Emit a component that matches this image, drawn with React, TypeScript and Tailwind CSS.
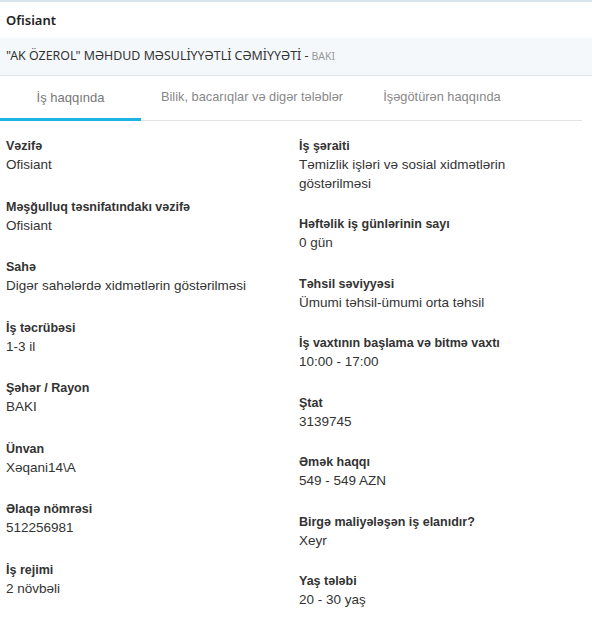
import React from "react";

type Item = { label: string; value: string };

const left: Item[] = [
  { label: "Vəzifə", value: "Ofisiant" },
  { label: "Məşğulluq təsnifatındakı vəzifə", value: "Ofisiant" },
  { label: "Sahə", value: "Digər sahələrdə xidmətlərin göstərilməsi" },
  { label: "İş təcrübəsi", value: "1-3 il" },
  { label: "Şəhər / Rayon", value: "BAKI" },
  { label: "Ünvan", value: "Xəqani14\\A" },
  { label: "Əlaqə nömrəsi", value: "512256981" },
  { label: "İş rejimi", value: "2 növbəli" },
];

const right: Item[] = [
  { label: "İş şəraiti", value: "Təmizlik işləri və sosial xidmətlərin göstərilməsi" },
  { label: "Həftəlik iş günlərinin sayı", value: "0 gün" },
  { label: "Təhsil səviyyəsi", value: "Ümumi təhsil-ümumi orta təhsil" },
  { label: "İş vaxtının başlama və bitmə vaxtı", value: "10:00 - 17:00" },
  { label: "Ştat", value: "3139745" },
  { label: "Əmək haqqı", value: "549 - 549 AZN" },
  { label: "Birgə maliyələşən iş elanıdır?", value: "Xeyr" },
  { label: "Yaş tələbi", value: "20 - 30 yaş" },
];

function Field({ item, tight }: { item: Item; tight?: boolean }) {
  return (
    <div className={tight ? "mb-[21px]" : "mb-[22px]"}>
      <div className="text-[12.5px] font-bold leading-[20px] text-[#333333]">{item.label}</div>
      <div className="text-[13.5px] leading-[18.5px] text-[#333333]">{item.value}</div>
    </div>
  );
}

export default function App() {
  return (
    <div className="w-[592px] h-[633px] bg-white overflow-hidden" style={{ fontFamily: '"Liberation Sans", Arial, sans-serif' }}>
      <div className="border-t-2 border-[#d7e6ee]">
        <div className="h-[36px] flex items-center px-[6px] pt-[1px]">
          <span className="text-[13px] font-semibold text-[#222222]" style={{ fontFamily: '"Noto Sans", sans-serif' }}>
            Ofisiant
          </span>
        </div>
        <div
          className="h-[38px] flex items-center px-[6px] bg-[#f4f8fb] border-b border-[#dde4e9]"
          style={{ fontFamily: '"Noto Sans", sans-serif' }}
        >
          <span className="text-[12.4px] text-[#333333]">"AK ÖZEROL" MƏHDUD MƏSULİYYƏTLİ CƏMİYYƏTİ - </span>
          <span className="text-[10.5px] text-[#999999] ml-[3px]">BAKI</span>
        </div>
      </div>
      <div className="mr-[10px] flex border-b border-[#e3e3e3] h-[45px]">
        <div className="w-[141px] flex items-center justify-center text-[13px] text-[#777777] border-b-[3px] border-[#1ab3e2] -mb-[1px] pt-[1px]">
          İş haqqında
        </div>
        <div className="w-[222px] flex items-center justify-center text-[12.8px] text-[#888888] pb-[2px]">
          Bilik, bacarıqlar və digər tələblər
        </div>
        <div className="w-[158px] flex items-center justify-center text-[12.8px] text-[#888888] pb-[2px]">
          İşəgötürən haqqında
        </div>
      </div>
      <div className="grid grid-cols-[293px_280px] pl-[6px] pt-[15px]">
        <div>
          {left.map((it) => (
            <Field key={it.label} item={it} />
          ))}
        </div>
        <div>
          {right.map((it) => (
            <Field key={it.label} item={it} tight />
          ))}
        </div>
      </div>
    </div>
  );
}
